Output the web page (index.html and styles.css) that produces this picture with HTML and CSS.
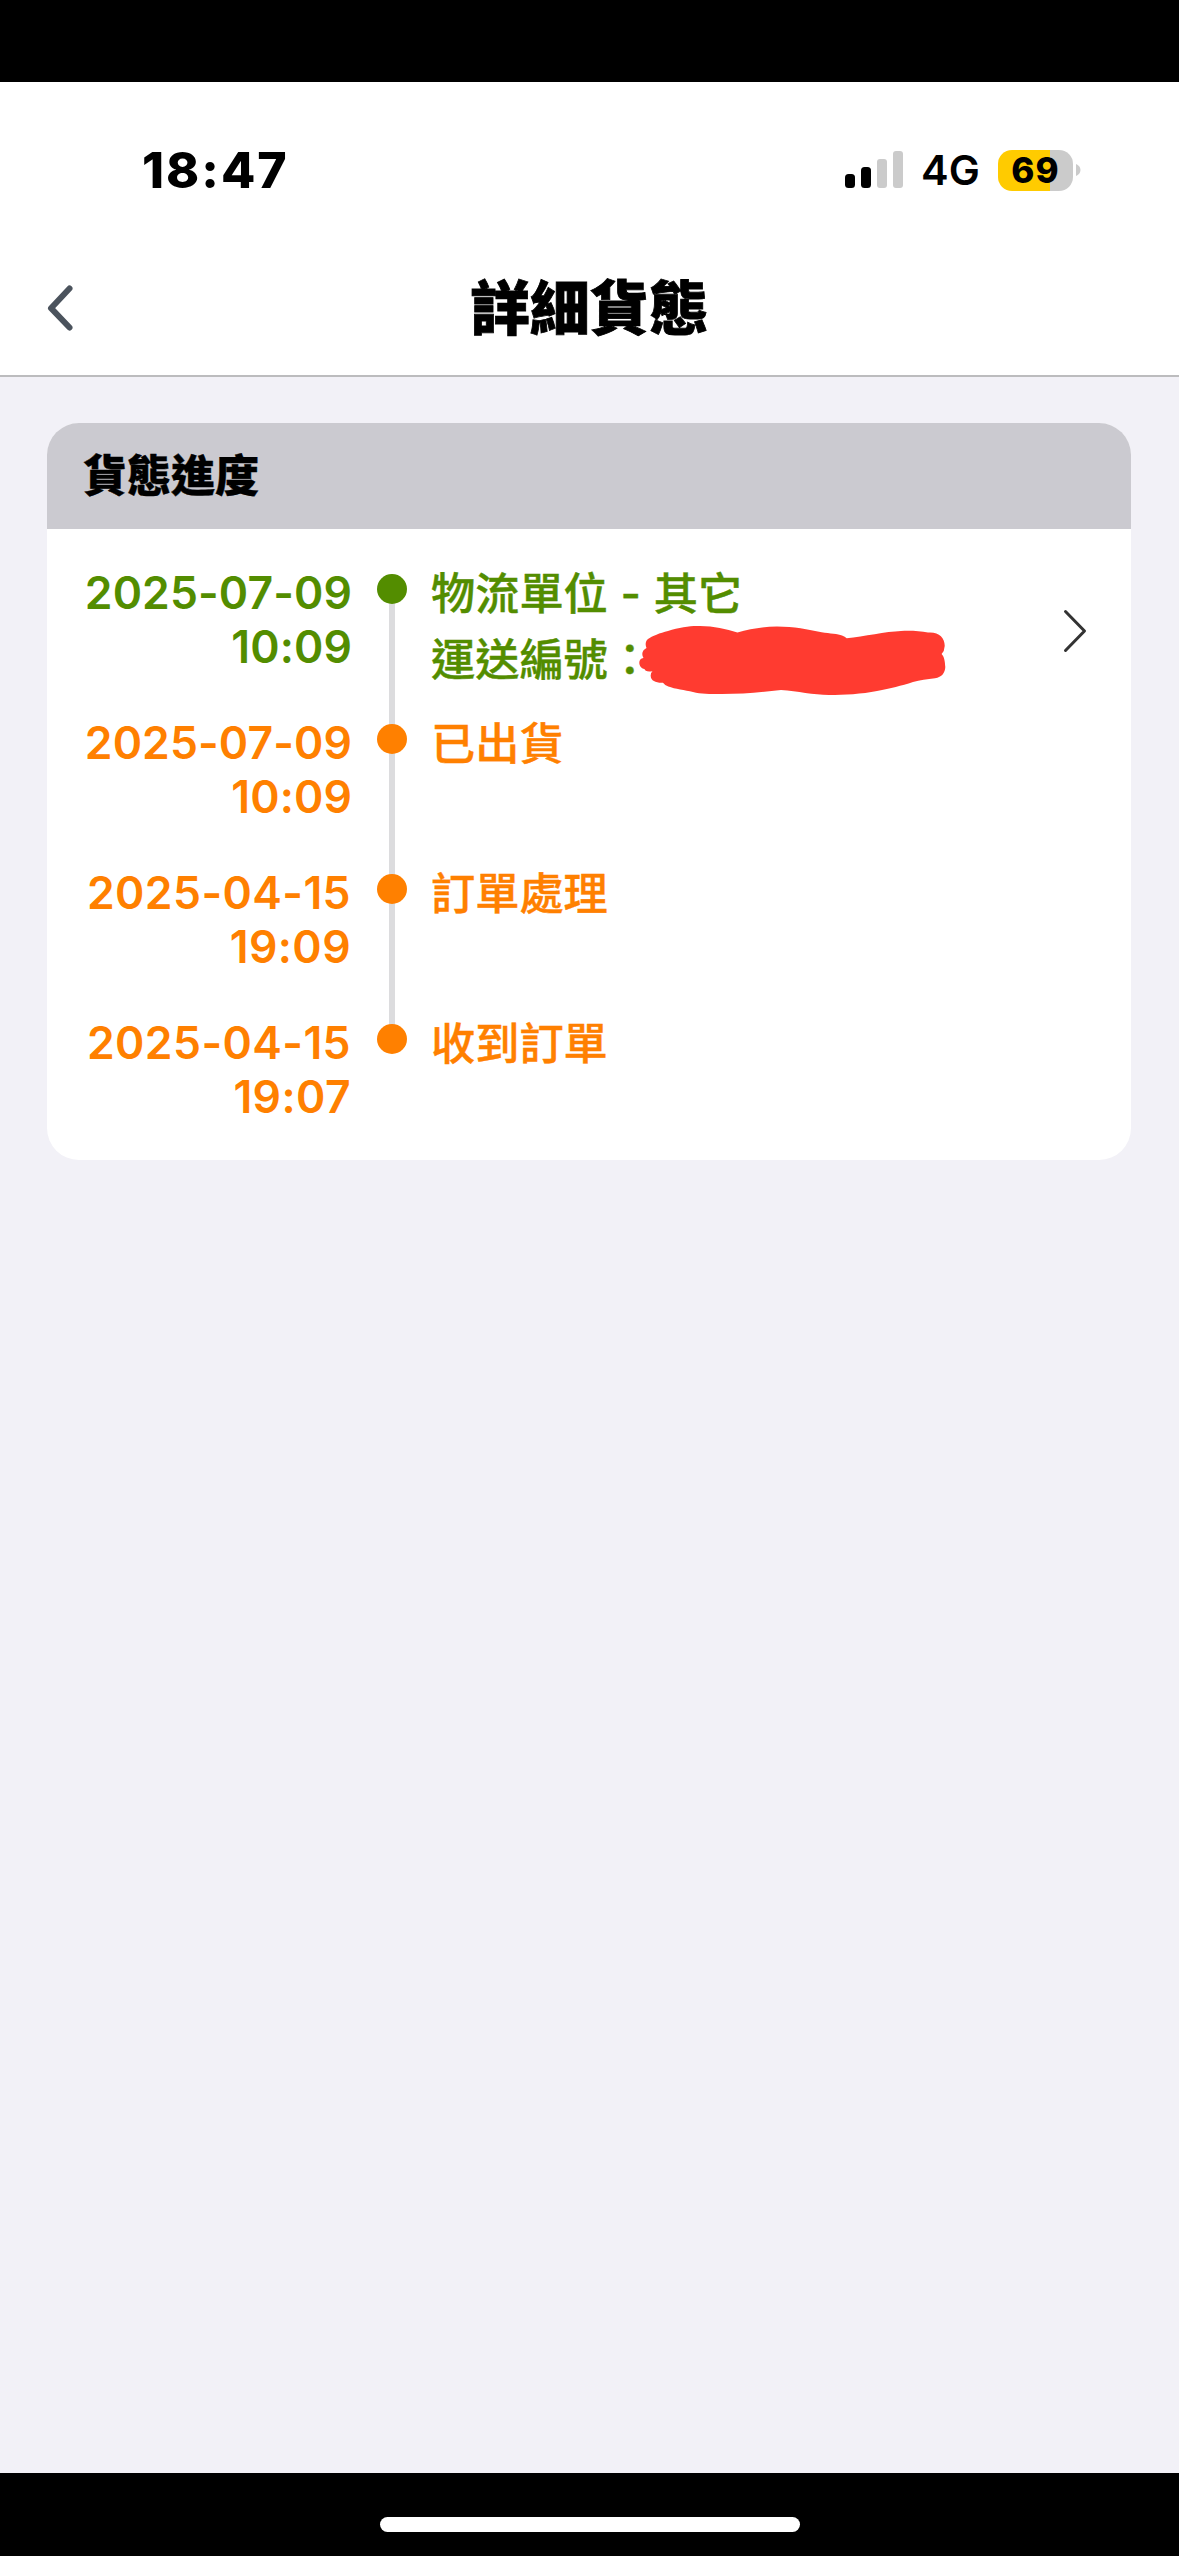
FILE: index.html
```html
<!DOCTYPE html>
<html lang="zh-Hant">
<head>
<meta charset="utf-8">
<title>詳細貨態</title>
<link rel="stylesheet" href="styles.css">
</head>
<body>
<div class="screen">
  <div class="top-band"></div>
  <header class="header">
    <div class="status-bar">
      <span class="clock">18:47</span>
      <div class="indicators">
        <svg class="signal" width="59" height="38" viewBox="0 0 59 38">
          <rect x="0" y="23" width="10" height="14" rx="3.5"/>
          <rect x="16" y="16" width="10" height="21" rx="3.5"/>
          <rect class="signal-off" x="32" y="8" width="10" height="29" rx="3"/>
          <rect class="signal-off" x="48" y="0" width="10" height="37" rx="3"/>
        </svg>
        <span class="network">4G</span>
        <div class="battery"><span class="battery-level">69</span></div>
        <svg class="battery-tip" width="5" height="12" viewBox="0 0 5 12"><path d="M0 0C2.5 1 4.5 3.2 4.5 6S2.500 11 0 12Z"/></svg>
      </div>
    </div>
    <div class="nav-bar">
      <svg class="back" width="29" height="48" viewBox="0 0 29 48"><path d="M24.500 4.500L6 24.200L24.500 43.500"/></svg>
      <h1 class="title">詳細貨態</h1>
    </div>
  </header>
  <main class="content">
    <section class="card">
      <h2 class="card-title">貨態進度</h2>
      <ol class="timeline">
        <li class="step current">
          <div class="when"><span>2025-07-09</span><span>10:09</span></div>
          <div class="rail"><i class="dot"></i></div>
          <div class="what">
            <p>物流單位 - 其它</p>
            <p>運送編號：</p>
            <svg class="scribble" width="314" height="80" viewBox="0 0 314 80"><path d="M12 19C16 16 24 13 32 11C44 7 56 5.500 64 6C78 6 90 9 101.400 12.500C114 9 126 6.500 141 6.500C158 6.500 172 9.500 185.600 12.300C194 13.500 202 14 206 15.500Q209 16.500 210.700 18.300C228 16.500 250 11.500 265 11C274 10.500 284 11 292 12.500C303 11.500 309 18 308.700 26Q308.500 31 305.600 34C308.500 37 309 42 309.300 47C309 53 306 57 299 58.300C291 59.500 284 60 277 62C265 66 255 68 241 71C226 74 208 75 193 75C177 75 162 71 145 70C126 72 106 74 86 74C73 74 65 74 57 72C49 70 39 69 32.300 66.500Q28.500 65 27 62.700C20 63 15 61 14.700 56Q14.500 53 16.500 51.300C11 52 9 51 8.500 49C2 48 1.500 38 7.500 38C5 34 6.500 30 10.500 28C9 25 9.500 21 12 19Z"/></svg>
          </div>
          <svg class="forward" width="28" height="48" viewBox="0 0 28 48"><path d="M4.500 4.500L23.500 24L4.500 43.500"/></svg>
        </li>
        <li class="step">
          <div class="when"><span>2025-07-09</span><span>10:09</span></div>
          <div class="rail"><i class="dot"></i></div>
          <div class="what"><p>已出貨</p></div>
        </li>
        <li class="step">
          <div class="when loose"><span>2025-04-15</span><span>19:09</span></div>
          <div class="rail"><i class="dot"></i></div>
          <div class="what"><p>訂單處理</p></div>
        </li>
        <li class="step">
          <div class="when loose"><span>2025-04-15</span><span>19:07</span></div>
          <div class="rail"><i class="dot"></i></div>
          <div class="what"><p>收到訂單</p></div>
        </li>
      </ol>
    </section>
  </main>
  <footer class="home-area"><div class="home-indicator"></div></footer>
</div>
</body>
</html>
```
FILE: styles.css
```css
* { box-sizing: border-box; margin: 0; padding: 0; }

body {
  background: #f2f1f7;
  color: #000;
  font-family: Inter, "Noto Sans CJK TC", sans-serif;
}

.screen {
  display: flex;
  flex-direction: column;
  width: 1179px;
  height: 2556px;
}

.top-band { height: 82px; background: #000; }

.header {
  height: 295px;
  background: #fff;
  border-bottom: 2px solid #bcbcbe;
}

.status-bar {
  display: flex;
  align-items: center;
  justify-content: space-between;
  height: 176px;
  padding: 0 98px 0 142px;
}

.clock { font-size: 50px; font-weight: 780; letter-spacing: 2px; line-height: 60px; }

.indicators { display: flex; align-items: center; }
.signal { margin-right: 17px; }
.signal-off { fill: #cbcbcb; }
.network { width: 60px; font-size: 41.500px; font-weight: 600; line-height: 52px; white-space: nowrap; }

.battery {
  width: 75px;
  height: 41px;
  margin-left: 17px;
  border-radius: 14px;
  background: linear-gradient(to right, #ffcb00 52px, #cbcbcb 52px);
  text-align: center;
}
.battery-level {
  display: block;
  font-size: 35px;
  font-weight: 850;
  letter-spacing: 1px;
  line-height: 41px;
}
.battery-tip { margin-left: 3px; fill: #cbcbcb; }

.nav-bar {
  display: grid;
  grid-template-columns: 60px 1fr 60px;
  align-items: center;
  height: 100px;
  padding: 0 45px;
}
.back { fill: none; stroke: #4b535d; stroke-width: 6; stroke-linecap: round; stroke-linejoin: round; }
.title {
  font-size: 59.500px;
  font-weight: 900;
  line-height: 88px;
  text-align: center;
  -webkit-text-stroke: 0.8px currentColor;
}

.content { flex: 1; padding: 46px 48px 0 47px; }

.card {
  height: 737px;
  overflow: hidden;
  border-radius: 32px;
  background: #fff;
}
.card-title {
  height: 106px;
  padding-left: 36px;
  background: #cbcad0;
  font-size: 44px;
  font-weight: 900;
  line-height: 106px;
  -webkit-text-stroke: 0.4px currentColor;
}

.timeline { padding: 36px 42px 0 38px; list-style: none; }

.step {
  position: relative;
  display: grid;
  grid-template-columns: 267px 30px 1fr auto;
  height: 150px;
  color: #ff8000;
  font-size: 44.500px;
  font-weight: 500;
}
.step.current { color: #538d00; }

.when {
  display: flex;
  flex-direction: column;
  align-items: flex-end;
  padding-top: 1px;
  font-weight: 580;
  letter-spacing: 0.1px;
  line-height: 54px;
  white-space: nowrap;
}
.when.loose { padding-right: 1px; letter-spacing: 0.400px; }

.rail {
  display: flex;
  justify-content: center;
  margin-left: 25px;
  width: 30px;
  padding-top: 9px;
  background: linear-gradient(#dcdcde, #dcdcde) center 24px / 6px 100% no-repeat;
}
.step + .step .rail { background-position: center top; }
.step:last-child .rail { background-size: 6px 15px; }
.dot { width: 30px; height: 30px; border-radius: 50%; background: currentColor; }

.what {
  position: relative;
  margin-top: -4px;
  padding-left: 49px;
  font-size: 44.200px;
  line-height: 66px;
  white-space: nowrap;
  word-spacing: 1px;
  -webkit-text-stroke: 0.400px currentColor;
}

.scribble { position: absolute; left: 254px; top: 59px; fill: #ff3b30; stroke: none; }

.forward {
  align-self: start;
  margin-top: 42px;
  fill: none;
  stroke: #333;
  stroke-width: 3;
  stroke-linecap: round;
  stroke-linejoin: round;
}

.home-area {
  display: flex;
  justify-content: center;
  height: 83px;
  padding-top: 44px;
  background: #000;
}
.home-indicator { width: 420px; height: 15px; border-radius: 8px; background: #fff; }
```
